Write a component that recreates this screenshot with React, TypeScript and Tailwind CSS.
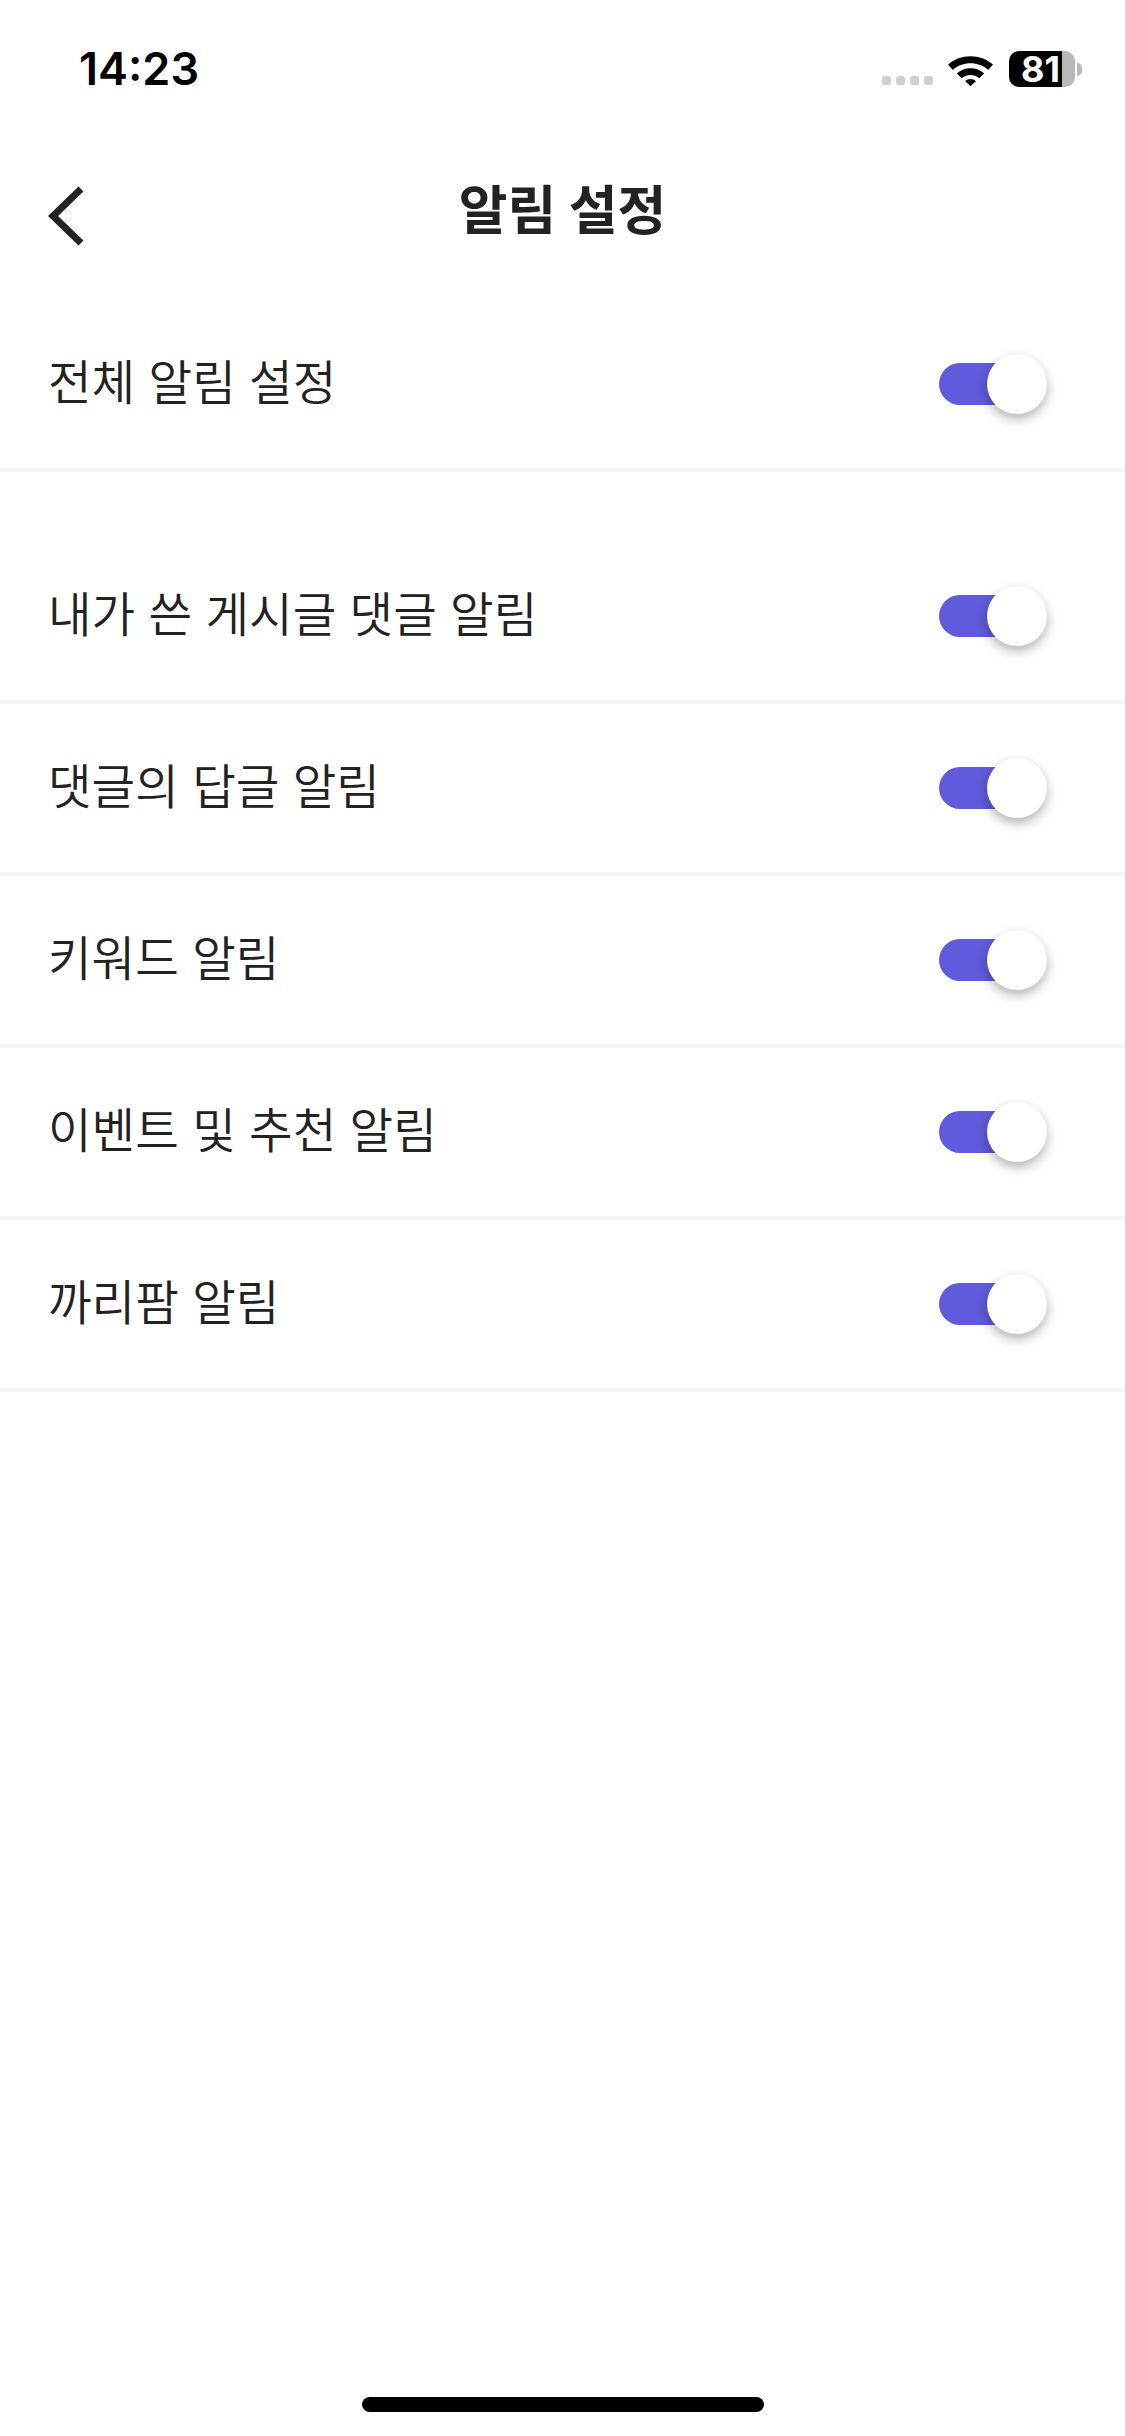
const fontKr = "font-['Inter','Noto_Sans_CJK_KR',sans-serif]"

const ROWS = ['내가 쓴 게시글 댓글 알림', '댓글의 답글 알림', '키워드 알림', '이벤트 및 추천 알림', '까리팜 알림']

function Toggle() {
  return (
    <div className="relative h-[42px] w-[108px] shrink-0">
      <div className="h-[42px] w-[80px] rounded-full bg-[#5f5bdc]" />
      <div className="absolute left-[48px] top-[-9px] h-[60px] w-[60px] rounded-full bg-white shadow-[0_5px_12px_rgba(0,0,0,0.3)]" />
    </div>
  )
}

function SettingRow({ label, className }: { label: string; className: string }) {
  return (
    <div className={`flex items-center justify-between border-b-4 border-[#f5f5f5] pl-[48px] pr-[78px] ${className}`}>
      <span className={`${fontKr} -mt-[2px] text-[47.4px] font-[350] leading-none text-[#222222]`}>{label}</span>
      <Toggle />
    </div>
  )
}

function StatusBar() {
  return (
    <div className="flex h-[136px] items-start justify-between pl-[79px] pr-[43px] pt-[42px]">
      <span className="font-['Inter',sans-serif] text-[45px] font-semibold leading-[54px] text-black">14:23</span>
      <div className="flex items-center pt-[9px]">
        <div className="mr-[15px] mt-[23px] flex gap-[5px]">
          <span className="h-[9px] w-[9px] rounded-[3px] bg-[#cfcfcf]" />
          <span className="h-[9px] w-[9px] rounded-[3px] bg-[#cfcfcf]" />
          <span className="h-[9px] w-[9px] rounded-[3px] bg-[#cfcfcf]" />
          <span className="h-[9px] w-[9px] rounded-[3px] bg-[#cfcfcf]" />
        </div>
        <svg width="45" height="34" viewBox="0 0 46 34" className="mr-[16px]">
          <path d="M0 12.5C12.5 1 33.5 1 46 12.5L41 18C31.5 9 14.5 9 5 18Z" fill="#000" />
          <path d="M9 21.5C16.5 14.5 29.5 14.5 37 21.5L32 26.5C26.5 22 19.5 22 14 26.5Z" fill="#000" />
          <path d="M17.5 29.5C20.5 26.5 25.5 26.5 28.5 29.5L23 34.5Z" fill="#000" />
        </svg>
        <div className="flex h-[36px] w-[53px] items-center justify-end rounded-l-[10px] bg-black pr-[2px] font-['Inter',sans-serif] text-[36px] font-bold leading-none text-white">
          81
        </div>
        <div className="h-[36px] w-[13px] rounded-r-[10px] bg-[#b8b8b8]" />
        <div className="ml-[2px] h-[13px] w-[5px] rounded-r-full bg-[#b8b8b8]" />
      </div>
    </div>
  )
}

export default function App() {
  return (
    <div className="flex h-[2436px] w-[1125px] flex-col overflow-hidden bg-white">
      <StatusBar />
      <header className="relative flex h-[152px] items-center justify-center">
        <svg width="40" height="62" viewBox="0 0 40 62" className="absolute left-[46px] top-[49px]">
          <path d="M35 4L7 31L35 58" fill="none" stroke="#222222" strokeWidth="7" />
        </svg>
        <h1 className={`${fontKr} -mt-[2px] text-[53px] font-bold leading-none text-[#222222]`}>알림 설정</h1>
      </header>
      <SettingRow label="전체 알림 설정" className="h-[184px] pt-[12px]" />
      <div className="h-[60px]" />
      <div className="flex flex-col">
        {ROWS.map((label) => (
          <SettingRow key={label} label={label} className="h-[172px]" />
        ))}
      </div>
      <div className="mt-auto flex justify-center pb-[24px]">
        <div className="h-[15px] w-[402px] rounded-full bg-black" />
      </div>
    </div>
  )
}
